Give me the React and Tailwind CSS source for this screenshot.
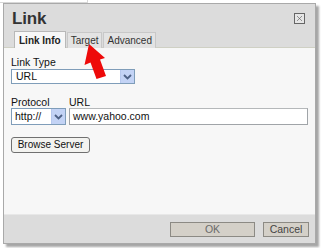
import { X } from 'lucide-react'

function Chevron() {
  return (
    <div className="w-[14px] h-full bg-[#c3d3f5] border-l border-[#b6c8ee] flex items-center justify-center">
      <svg width="9" height="6" viewBox="0 0 9 6">
        <path d="M1 1 L4.5 4.5 L8 1" fill="none" stroke="#4d6185" strokeWidth="1.8" />
      </svg>
    </div>
  )
}

export default function App() {
  return (
    <div className="w-[323px] h-[248px] bg-white relative overflow-hidden pt-[3px] pl-[3px] font-['Liberation_Sans',Arial,sans-serif] text-[#111]">
      {/* faint page lines behind the dialog */}
      <div className="absolute left-0 top-0 w-[88px] h-[3px] border-b border-r border-[#d8d8d8]" />

      <div className="w-[313px] h-[241px] flex flex-col border border-[#a9a9a9] shadow-[3px_3px_2px_rgba(0,0,0,0.35)]">
        {/* 1. title bar + tabs */}
        <div className="relative h-[44px] bg-[#dcdcdc] border-b border-[#cfd0c4] flex flex-col justify-between">
          <div className="pl-[8px] pt-[5px] text-[17px] leading-[20px] font-bold text-[#333] tracking-[-0.2px]">Link</div>
          <div className="absolute right-[10px] top-[9px] w-[11px] h-[11px] border border-[#666] bg-[#e6e6e6] flex items-center justify-center">
            <X size={9} strokeWidth={1.6} color="#555" />
          </div>
          <div className="flex items-end pl-[10px] gap-[1px] h-[17px] mb-[-1px] text-[10px]">
            <div className="h-[17px] px-[4px] flex items-center bg-[#f7f7f7] border border-b-0 border-[#b8b8b8] font-bold text-[#222]">Link Info</div>
            <div className="h-[16px] px-[3px] flex items-center bg-[#e3e3e3] border border-b-0 border-[#c8c8c8] text-[#333]">Target</div>
            <div className="h-[16px] px-[3px] flex items-center bg-[#e3e3e3] border border-b-0 border-[#c8c8c8] text-[#333]">Advanced</div>
          </div>
        </div>

        {/* 2. link info */}
        <div className="flex-1 bg-[#f7f7f7] pl-[7px] pt-[8px] text-[10.5px]">
          <div className="leading-[13px]">Link Type</div>
          <div className="w-[124px] h-[15px] bg-white border border-[#7f9db9] flex">
            <span className="flex-1 pl-[4px] leading-[13px]">URL</span>
            <Chevron />
          </div>

          <div className="flex gap-[3px] mt-[12px]">
            <div className="flex flex-col">
              <span className="leading-[12px]">Protocol</span>
              <div className="w-[55px] h-[17px] bg-white border border-[#7f9db9] flex">
                <span className="flex-1 pl-[3px] leading-[15px]">http://</span>
                <Chevron />
              </div>
            </div>
            <div className="flex flex-col">
              <span className="leading-[12px]">URL</span>
              <div className="w-[239px] h-[17px] bg-white border border-[#a0a4a8] border-t-[#b5b8ba] pl-[3px] leading-[15px]">www.yahoo.com</div>
            </div>
          </div>

          <button className="mt-[12px] w-[79px] h-[16px] bg-[#f3f3f0] border border-[#707070] rounded-[3px] text-[10px] leading-[14px] text-[#111]">
            Browse Server
          </button>
        </div>

        {/* 3. footer */}
        <div className="h-[29px] bg-[#dcdcdc] border-t border-[#e8e8e8] flex items-start justify-end gap-[8px] pt-[7px] pr-[6px] text-[10.5px]">
          <button className="w-[85px] h-[15px] bg-[#d4d0c8] border border-[#8c8a84] text-[#6a6a6a] leading-[13px]">OK</button>
          <button className="w-[46px] h-[15px] bg-[#d4d0c8] border border-[#8c8a84] text-[#444] leading-[13px]">Cancel</button>
        </div>
      </div>

      {/* red arrow pointing at the Target tab */}
      <svg className="absolute left-0 top-0 pointer-events-none" width="323" height="248">
        <polygon points="89,44 105,58 100,59.5 106,76 96.5,79 90.5,62.5 84.5,65" fill="#ee0a0a" />
      </svg>
    </div>
  )
}
